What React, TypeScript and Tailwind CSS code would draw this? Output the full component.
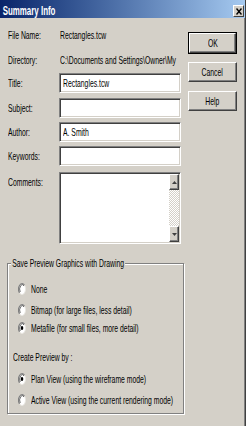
import React from "react";

function T({ children, className = "" }: { children: React.ReactNode; className?: string }) {
  return (
    <span className={"inline-block origin-left scale-x-[0.62] whitespace-nowrap " + className}>
      {children}
    </span>
  );
}

function TC({ children }: { children: React.ReactNode }) {
  return (
    <span className="inline-block origin-center scale-x-[0.62] whitespace-nowrap">{children}</span>
  );
}

function Radio({ checked }: { checked?: boolean }) {
  return (
    <svg width="8" height="12" viewBox="0 0 8 12" className="shrink-0">
      <ellipse cx="4" cy="6" rx="3.5" ry="5.5" fill="#ffffff" stroke="#e8e6e0" strokeWidth="1" />
      <path d="M1.53 9.89 A3.5 5.5 0 0 1 6.47 2.11" fill="none" stroke="#808080" strokeWidth="1.2" />
      <path d="M2.2 9 A2.6 4.6 0 0 1 6 2.8" fill="none" stroke="#404040" strokeWidth="0.8" />
      {checked && <ellipse cx="4" cy="6" rx="1.3" ry="2" fill="#000000" />}
    </svg>
  );
}

function Field({ label, value }: { label: string; value?: string }) {
  return (
    <div className="flex h-[20px] items-center">
      <div className="w-[51px] shrink-0">
        <T>{label}</T>
      </div>
      <div className="w-[122px] h-[20px] bg-white border border-t-[#808080] border-l-[#808080] border-b-white border-r-white shadow-[inset_1px_1px_0_#404040,inset_-1px_-1px_0_#d4d0c8] flex items-center pl-[3px] overflow-hidden">
        {value && <T>{value}</T>}
      </div>
    </div>
  );
}

function RadioRow({ label, checked, mt }: { label: string; checked?: boolean; mt: string }) {
  return (
    <div className={"flex items-center h-[14px] pl-[10px] gap-[5px] " + mt}>
      <Radio checked={checked} />
      <T>{label}</T>
    </div>
  );
}

const raised =
  "bg-[#d4d0c8] border border-t-white border-l-white border-b-[#404040] border-r-[#404040] shadow-[inset_-1px_-1px_0_#808080] flex items-center justify-center";

export default function App() {
  return (
    <div className="w-[246px] h-[426px] bg-[#d4d0c8] flex flex-col font-['Liberation_Sans',Arial,sans-serif] text-[11px] leading-[14px] text-black border-r border-r-[#404040] shadow-[inset_-1px_0_0_#808080] overflow-hidden">
      {/* Title bar */}
      <div className="h-[18px] shrink-0 flex justify-between bg-linear-to-r from-[#0a246a] to-[#a6caf0]">
        <span className="inline-block origin-left scale-x-[0.66] whitespace-nowrap text-white font-bold text-[12px] leading-[18px] pl-[4px] pt-[2px]">
          Summary Info
        </span>
        <div className="mt-[5px] mr-[1px] w-[11px] h-[12px] bg-[#d4d0c8] border border-t-white border-l-white border-b-[#404040] border-r-[#404040] flex items-center justify-center">
          <svg width="6" height="7" viewBox="0 0 6 7">
            <path d="M0.5 0.5 L5.5 6.5 M5.5 0.5 L0.5 6.5" stroke="#000" strokeWidth="1.4" />
          </svg>
        </div>
      </div>

      {/* Body */}
      <div className="flex flex-1">
        <div className="w-[184px] shrink-0 pl-[8px] flex flex-col">
          <div className="mt-[10px] flex h-[14px]">
            <div className="w-[52px] shrink-0">
              <T>File Name:</T>
            </div>
            <T>Rectangles.tcw</T>
          </div>
          <div className="mt-[11px] flex h-[14px]">
            <div className="w-[52px] shrink-0">
              <T>Directory:</T>
            </div>
            <T>C:\Documents and Settings\Owner\My</T>
          </div>

          <div className="mt-[6px]">
            <Field label="Title:" value="Rectangles.tcw" />
          </div>
          <div className="mt-[5px]">
            <Field label="Subject:" />
          </div>
          <div className="mt-[4px]">
            <Field label="Author:" value="A. Smith" />
          </div>
          <div className="mt-[4px]">
            <Field label="Keywords:" />
          </div>

          <div className="mt-[6px] flex">
            <div className="w-[51px] shrink-0 pt-[3px]">
              <T>Comments:</T>
            </div>
            <div className="w-[122px] h-[72px] bg-white border border-t-[#808080] border-l-[#808080] border-b-white border-r-white shadow-[inset_1px_1px_0_#404040,inset_-1px_-1px_0_#d4d0c8] flex justify-end p-[1px]">
              <div className="w-[10px] flex flex-col">
                <div className={"h-[16px] " + raised}>
                  <svg width="5" height="3" viewBox="0 0 5 3">
                    <path d="M2.5 0 L5 3 L0 3 Z" fill="#404040" />
                  </svg>
                </div>
                <div className="flex-1 bg-[repeating-conic-gradient(#ffffff_0_25%,#d4d0c8_0_50%)] bg-size-[2px_2px]" />
                <div className={"h-[16px] " + raised}>
                  <svg width="5" height="3" viewBox="0 0 5 3">
                    <path d="M0 0 L5 0 L2.5 3 Z" fill="#404040" />
                  </svg>
                </div>
              </div>
            </div>
          </div>

          {/* Group box */}
          <div className="relative mt-[19px] -ml-[1px] w-[177px] h-[151px] border border-[#808080] shadow-[inset_1px_1px_0_#ffffff,1px_1px_0_#ffffff] flex flex-col">
            <div className="absolute -top-[8px] left-[3px] h-[14px]">
              <T className="bg-[#d4d0c8] px-[2px]">Save Preview Graphics with Drawing</T>
            </div>
            <RadioRow label="None" mt="mt-[18px]" />
            <RadioRow label="Bitmap (for large files, less detail)" mt="mt-[7px]" />
            <RadioRow label="Metafile (for small files, more detail)" checked mt="mt-[4px]" />
            <div className="mt-[15px] h-[14px] pl-[5px]">
              <T>Create Preview by :</T>
            </div>
            <RadioRow label="Plan View (using the wireframe mode)" checked mt="mt-[8px]" />
            <RadioRow label="Active View (using the current rendering mode)" mt="mt-[7px]" />
          </div>
        </div>

        {/* Buttons */}
        <div className="flex flex-col pl-[4px] pt-[14px]">
          <div className="w-[49px] h-[22px] border border-black">
            <div className={"w-full h-full " + raised}>
              <TC>OK</TC>
            </div>
          </div>
          <div className={"mt-[8px] w-[49px] h-[20px] " + raised}>
            <TC>Cancel</TC>
          </div>
          <div className={"mt-[9px] w-[49px] h-[20px] " + raised}>
            <TC>Help</TC>
          </div>
        </div>
      </div>
    </div>
  );
}
